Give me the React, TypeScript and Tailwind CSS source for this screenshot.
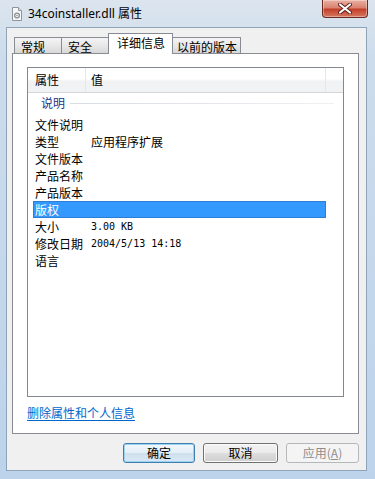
import React from 'react';

const rows = [
  { k: '文件说明', v: '' },
  { k: '类型', v: '应用程序扩展' },
  { k: '文件版本', v: '' },
  { k: '产品名称', v: '' },
  { k: '产品版本', v: '' },
  { k: '版权', v: '', selected: true },
  { k: '大小', v: '3.00 KB', mono: true },
  { k: '修改日期', v: '2004/5/13 14:18', mono: true },
  { k: '语言', v: '' },
];

function FileIcon() {
  return (
    <svg width="12" height="14" viewBox="0 0 12 14">
      <path d="M1.5 0.5h6l3 3v10h-9z" fill="#f7f7f7" stroke="#8e959c" />
      <path d="M7.5 0.5v3h3" fill="#e2e5e8" stroke="#8e959c" />
      <circle cx="6" cy="8.5" r="2.4" fill="none" stroke="#8a9097" strokeWidth="1.3" />
      <circle cx="6" cy="8.5" r="0.8" fill="#8a9097" />
    </svg>
  );
}

function CloseButton() {
  return (
    <div className="absolute right-[7px] top-0 flex h-[18px] w-[46px] items-center justify-center rounded-b-[4px] border border-t-0 border-[#6b2b22] bg-[linear-gradient(to_bottom,#eab0a4_0%,#d9826f_45%,#c2402a_55%,#d7775f_100%)] shadow-[inset_0_0_0_1px_rgba(255,255,255,0.35)]">
      <svg width="14" height="11" viewBox="0 0 14 11">
        <path d="M2 1.5l10 8M12 1.5l-10 8" stroke="#5a2018" strokeWidth="4" strokeLinecap="round" />
        <path d="M2 1.5l10 8M12 1.5l-10 8" stroke="#ffffff" strokeWidth="2.2" strokeLinecap="round" />
      </svg>
    </div>
  );
}

function Tab({ label, width, selected, pad }: { label: string; width: string; selected?: boolean; pad: string }) {
  if (selected) {
    return (
      <div className={`relative z-10 -mb-px -ml-px flex h-[21px] items-start border border-b-0 border-[#898c95] bg-white pt-[1px] text-[12px] leading-[16px] text-black ${width} ${pad}`}>
        {label}
      </div>
    );
  }
  return (
    <div className={`-ml-px flex h-[16px] items-start border border-b-0 border-[#898c95] bg-[linear-gradient(to_bottom,#f4f4f4_0%,#e8e8e8_50%,#d8d8d8_100%)] text-[12px] leading-[16px] text-black ${width} ${pad}`}>
      {label}
    </div>
  );
}

function Button({ label, width, kind }: { label: React.ReactNode; width: string; kind: 'default' | 'normal' | 'disabled' }) {
  const styles = {
    default:
      'border-[#3c7fb1] bg-[linear-gradient(to_bottom,#f3f8fc_0%,#e3eef7_50%,#cfe0ee_51%,#d9e8f3_100%)] text-black shadow-[inset_0_0_0_1px_#9fd2f1]',
    normal:
      'border-[#707070] bg-[linear-gradient(to_bottom,#f2f2f2_0%,#ebebeb_50%,#dddddd_51%,#cfcfcf_100%)] text-black shadow-[inset_0_0_0_1px_#fbfbfb]',
    disabled: 'border-[#b5b8bb] bg-[#f4f4f4] text-[#8d8d8d]',
  };
  return (
    <div className={`flex h-[20px] items-center justify-center rounded-[3px] border text-[12px] leading-none ${width} ${styles[kind]}`}>
      {label}
    </div>
  );
}

export default function App() {
  return (
    <div className="relative flex h-[479px] w-[375px] flex-col overflow-hidden bg-[linear-gradient(to_bottom,#dce5ee_0%,#ccdcec_12%,#bcd3eb_100%)] pb-[8px] pl-[6px] pr-[8px] font-['Noto_Sans_CJK_SC',sans-serif] text-black">
      {/* title bar */}
      <div className="flex h-[27px] items-center gap-[5px] pl-[5px] pt-[1px]">
        <FileIcon />
        <span className="font-['Noto_Sans','Noto_Sans_CJK_SC',sans-serif] text-[12px] leading-none text-black">
          34coinstaller.dll 属性
        </span>
      </div>
      <CloseButton />

      {/* client area */}
      <div className="flex flex-1 flex-col border border-[#8fa3b9] bg-[#f0f0f0] pl-[5px] pr-[7px] pt-[5px] pb-[7px]">
        {/* tabs */}
        <div className="flex h-[20px] items-end pl-[3px]">
          <Tab label="常规" width="w-[48px]" pad="pl-[6px] pt-[1px]" />
          <Tab label="安全" width="w-[48px]" pad="pl-[6px] pt-[1px]" />
          <Tab label="详细信息" width="w-[65px]" pad="pl-[8px]" selected />
          <Tab label="以前的版本" width="w-[69px]" pad="pl-[4px] pt-[1px]" />
        </div>

        {/* tab panel */}
        <div className="flex flex-1 flex-col border border-[#898c95] bg-white px-[14px] pt-[13px]">
          <div className="flex h-[330px] flex-col border border-[#828790] bg-white">
            {/* header */}
            <div className="flex h-[25px] items-center border-b border-[#d5d5d5] bg-[linear-gradient(to_bottom,#ffffff_0%,#ffffff_45%,#f1f2f4_55%,#f1f2f4_100%)] text-[12px] leading-none">
              <div className="flex h-full w-[58px] items-center border-r border-[#e3e8ee] pl-[7px]">属性</div>
              <div className="flex h-full w-[240px] items-center border-r border-[#e3e8ee] pl-[5px]">值</div>
              <div className="flex-1" />
            </div>

            {/* group */}
            <div className="flex h-[20px] items-center pl-[13px] pr-[9px]">
              <span className="text-[12px] leading-none text-[#1e3287]">说明</span>
              <div className="ml-[5px] h-px flex-1 bg-[linear-gradient(to_right,#d8dde4,#eef0f3)]" />
            </div>

            {/* rows */}
            <div className="flex flex-col pt-[3px] pl-[5px]">
              {rows.map((r) => (
                <div
                  key={r.k}
                  className={`flex h-[17px] w-[293px] items-center text-[12px] leading-none ${
                    r.selected ? 'border border-[#2d7fd6] bg-[#3399ff] text-white' : 'border border-transparent'
                  }`}
                >
                  <div className="w-[57px] pl-[1px]">{r.k}</div>
                  {r.v && (
                    <div className={r.mono ? "font-['DejaVu_Sans_Mono',monospace] text-[10px]" : ''}>{r.v}</div>
                  )}
                </div>
              ))}
            </div>
          </div>

          <div className="mt-[8px] text-[12px] leading-[16px] text-[#0066cc] underline underline-offset-2">
            删除属性和个人信息
          </div>
        </div>

        {/* buttons */}
        <div className="mt-[9px] flex justify-end gap-[8px] pr-[0px]">
          <Button label="确定" width="w-[72px]" kind="default" />
          <Button label="取消" width="w-[75px]" kind="normal" />
          <Button
            label={
              <span>
                应用(<span className="underline">A</span>)
              </span>
            }
            width="w-[73px]"
            kind="disabled"
          />
        </div>
      </div>
    </div>
  );
}
